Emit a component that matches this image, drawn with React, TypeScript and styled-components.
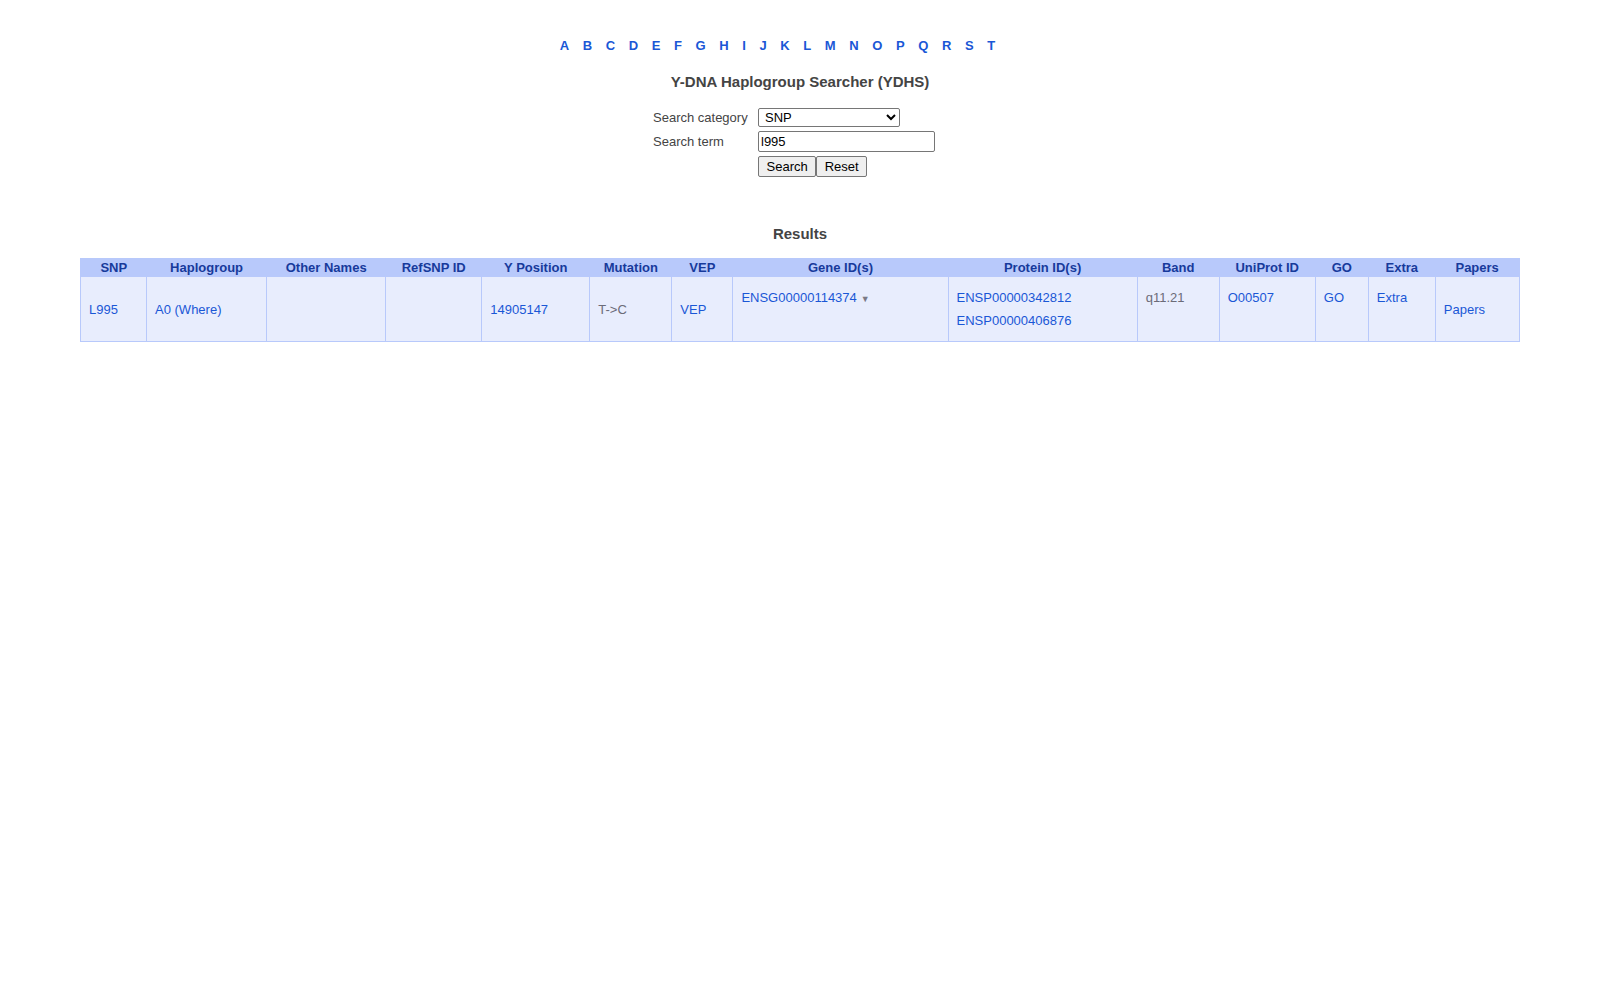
import React from "react";
import styled, { createGlobalStyle } from "styled-components";

const GlobalStyle = createGlobalStyle`
  body {
    margin: 0;
    background: #ffffff;
    font-family: "Liberation Sans", Arial, sans-serif;
    color: #444444;
  }
`;

const Page = styled.div`
  width: 1600px;
  padding-top: 38px;
`;

const LetterNav = styled.nav`
  display: flex;
  justify-content: center;
  gap: 13.6px;
  padding-right: 45px;
  font-size: 13px;
  font-weight: bold;
  line-height: 16px;
`;

const LetterLink = styled.a`
  color: #1a57d6;
  text-decoration: none;
`;

const Heading = styled.h2<{ $top: number }>`
  margin: ${(p) => p.$top}px 0 0;
  text-align: center;
  font-size: 15px;
  line-height: 18px;
  font-weight: bold;
  color: #444444;
`;

const SearchForm = styled.form`
  display: grid;
  grid-template-columns: 105px 177px;
  row-gap: 4px;
  justify-content: center;
  align-items: center;
  padding-right: 12px;
  margin-top: 17px;
  font-size: 13px;
  color: #444444;
`;

const Label = styled.label`
  line-height: 18px;
`;

const Select = styled.select`
  width: 142px;
  height: 19px;
  font-family: "Liberation Sans", Arial, sans-serif;
  font-size: 13px;
  padding: 0 2px;
  border: 1px solid #767676;
  border-radius: 2px;
  background: #ffffff;
  color: #000000;
`;

const TextInput = styled.input`
  box-sizing: border-box;
  width: 177px;
  height: 21px;
  font-family: "Liberation Sans", Arial, sans-serif;
  font-size: 13px;
  padding: 1px 2px;
  border: 1px solid #767676;
  border-radius: 2px;
  color: #000000;
`;

const Buttons = styled.div`
  display: flex;
`;

const Button = styled.button`
  box-sizing: border-box;
  height: 21px;
  padding: 1px 7.5px;
  font-family: "Liberation Sans", Arial, sans-serif;
  font-size: 13px;
  color: #000000;
  background: #efefef;
  border: 1px solid #767676;
  border-radius: 2px;
`;

const ResultsTable = styled.table`
  width: 90%;
  margin: 15px auto 0;
  table-layout: fixed;
  border-collapse: collapse;
  border: 1px solid #b8c9fb;
  font-size: 13px;
`;

const Th = styled.th`
  background: #b8c9fb;
  color: #173a9b;
  font-weight: bold;
  height: 17px;
  padding: 0;
  line-height: 17px;
  text-align: center;
`;

const Td = styled.td<{ $top?: boolean }>`
  background: #e8edfd;
  border: 1px solid #b8c9fb;
  padding: 9px 8px 8px;
  line-height: 23.4px;
  text-align: left;
  vertical-align: ${(p) => (p.$top ? "top" : "middle")};
  color: #6b6b78;
`;

const CellLink = styled.a`
  display: block;
  color: #1a57d6;
  text-decoration: none;
`;

const Caret = styled.span`
  font-size: 9px;
  color: #7a7a86;
  margin-left: 4px;
`;

const letters = "ABCDEFGHIJKLMNOPQRST".split("");

const columns = [
  { name: "SNP", width: 66 },
  { name: "Haplogroup", width: 120 },
  { name: "Other Names", width: 119 },
  { name: "RefSNP ID", width: 96 },
  { name: "Y Position", width: 108 },
  { name: "Mutation", width: 82 },
  { name: "VEP", width: 61 },
  { name: "Gene ID(s)", width: 215 },
  { name: "Protein ID(s)", width: 189 },
  { name: "Band", width: 82 },
  { name: "UniProt ID", width: 96 },
  { name: "GO", width: 53 },
  { name: "Extra", width: 67 },
  { name: "Papers", width: 84 },
];

export default function App() {
  return (
    <>
      <GlobalStyle />
      <Page>
        <LetterNav>
          {letters.map((l) => (
            <LetterLink href="#" key={l}>
              {l}
            </LetterLink>
          ))}
        </LetterNav>

        <Heading $top={19}>Y-DNA Haplogroup Searcher (YDHS)</Heading>

        <SearchForm onSubmit={(e) => e.preventDefault()}>
          <Label>Search category</Label>
          <Select defaultValue="SNP">
            <option>SNP</option>
            <option>Haplogroup</option>
            <option>Gene</option>
          </Select>
          <Label>Search term</Label>
          <TextInput defaultValue="l995" />
          <span />
          <Buttons>
            <Button type="submit">Search</Button>
            <Button type="reset">Reset</Button>
          </Buttons>
        </SearchForm>

        <Heading $top={48}>Results</Heading>

        <ResultsTable>
          <colgroup>
            {columns.map((c) => (
              <col key={c.name} style={{ width: c.width }} />
            ))}
          </colgroup>
          <thead>
            <tr>
              {columns.map((c) => (
                <Th key={c.name}>{c.name}</Th>
              ))}
            </tr>
          </thead>
          <tbody>
            <tr>
              <Td>
                <CellLink href="#">L995</CellLink>
              </Td>
              <Td>
                <CellLink href="#">A0 (Where)</CellLink>
              </Td>
              <Td />
              <Td />
              <Td>
                <CellLink href="#">14905147</CellLink>
              </Td>
              <Td>T-&gt;C</Td>
              <Td>
                <CellLink href="#">VEP</CellLink>
              </Td>
              <Td $top>
                <CellLink href="#">
                  ENSG00000114374
                  <Caret>▼</Caret>
                </CellLink>
              </Td>
              <Td $top>
                <CellLink href="#">ENSP00000342812</CellLink>
                <CellLink href="#">ENSP00000406876</CellLink>
              </Td>
              <Td $top>q11.21</Td>
              <Td $top>
                <CellLink href="#">O00507</CellLink>
              </Td>
              <Td $top>
                <CellLink href="#">GO</CellLink>
              </Td>
              <Td $top>
                <CellLink href="#">Extra</CellLink>
              </Td>
              <Td>
                <CellLink href="#">Papers</CellLink>
              </Td>
            </tr>
          </tbody>
        </ResultsTable>
      </Page>
    </>
  );
}
